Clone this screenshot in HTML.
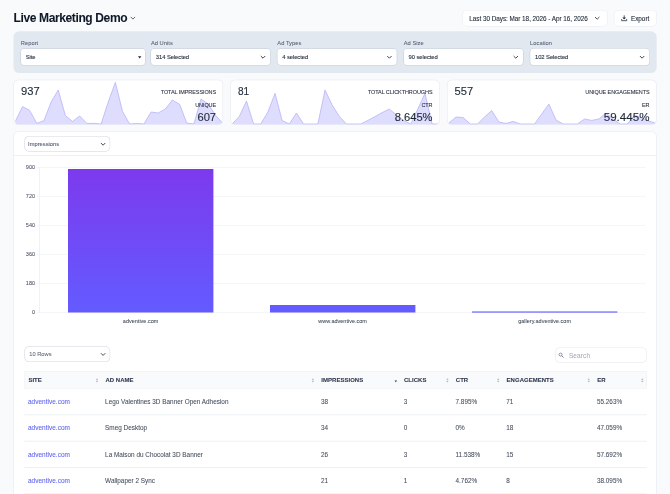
<!DOCTYPE html>
<html><head><meta charset="utf-8"><title>Live Marketing Demo</title>
<style>
*{box-sizing:border-box;margin:0;padding:0}
html,body{width:670px;height:494px;overflow:hidden;background:#f8fafc}
body{font-family:"Liberation Sans",sans-serif;position:relative;color:#1f2937}
#root{-webkit-text-stroke:0.6px;left:0;top:0;width:6700px;height:4940px;transform:scale(0.1);transform-origin:0 0;will-change:transform}
.abs,.si{position:absolute;display:block;overflow:visible}
.si{top:3780px}
div{position:absolute;white-space:nowrap}
.title{left:135px;top:109px;font-size:121px;font-weight:bold;letter-spacing:-4.2px;color:#111827;line-height:140px}
.btn{top:100px;height:164px;font-size:64px;line-height:171px;color:#1f2937;-webkit-text-stroke:1px #1f2937}
.panel{left:135px;top:312px;width:6432px;height:419px;background:#e2e8f0;border-radius:58px}
.flab{top:394px;font-size:57.5px;line-height:70px;color:#566275;letter-spacing:0.2px}
.fsel{top:484px;height:172px;font-size:59px;letter-spacing:-1px;-webkit-text-stroke:1px #1f2937;line-height:160px;color:#1f2937}
.fsel span{position:absolute;left:53px;top:6px}
.card{background:#fff;border:5px solid #e3e7ed;border-radius:40px}
.big{font-size:104px;line-height:120px;letter-spacing:0;color:#1f2937;-webkit-text-stroke:1.2px #1f2937}
.slab{font-size:55px;line-height:70px;color:#1f2937;letter-spacing:-0.8px;-webkit-text-stroke:0.8px #1f2937}
.sel2{left:244px;width:857px;height:156px;font-size:57.5px;line-height:166px;color:#525d70;padding-left:37px;-webkit-text-stroke:0.8px #525d70}
.yl{left:150px;width:200px;text-align:right;font-size:55px;line-height:70px;color:#464f5d;-webkit-text-stroke:0.6px #464f5d}
.gl{left:366px;width:6089px;height:7px;background:#f0f2f5}
.xl{width:1000px;text-align:center;top:3171px;font-size:55px;line-height:70px;color:#3f4856;-webkit-text-stroke:0.5px #3f4856}
.th{top:3762px;font-size:60px;font-weight:bold;letter-spacing:0.2px;line-height:70px;color:#2e3850;-webkit-text-stroke:0.8px #2e3850}
.td{font-size:64px;line-height:80px;color:#444d5b}
.lk{color:#5b5fef;font-size:65px}
.rl{left:244px;width:6223px;height:7px;background:#e6ebf1}
</style></head><body><div id="root">
<div class="title">Live Marketing Demo</div>
<svg class="abs" style="left:1304px;top:167px;width:50px;height:30px" viewBox="0 0 5 3"><path d="M0.6 0.5 L2.5 2.4 L4.4 0.5" fill="none" stroke="#4b5563" stroke-width="0.9" stroke-linecap="round" stroke-linejoin="round"/></svg>
<div style="left:4624px;top:99px;width:1453px;height:165px;border-radius:46px;background:#e8ecf1"><div style="left:5px;top:5px;width:1443px;height:155px;border-radius:41px;background:#fff"></div></div><div class="btn" style="left:4624px;width:1453px"><span style="position:absolute;left:69px;letter-spacing:-0.5px">Last 30 Days: Mar 18, 2026 - Apr 16, 2026</span></div>
<svg class="abs" style="left:5947px;top:168px;width:50px;height:30px" viewBox="0 0 5 3"><path d="M0.6 0.5 L2.5 2.4 L4.4 0.5" fill="none" stroke="#374151" stroke-width="0.9" stroke-linecap="round" stroke-linejoin="round"/></svg>
<div style="left:6139px;top:99px;width:428px;height:165px;border-radius:46px;background:#e8ecf1"><div style="left:5px;top:5px;width:418px;height:155px;border-radius:41px;background:#fff"></div></div><div class="btn" style="left:6138px;width:429px"><span style="position:absolute;left:171px;letter-spacing:-0.2px">Export</span></div>
<svg class="abs" style="left:6212px;top:153px;width:60px;height:60px" viewBox="0 0 6 6"><path d="M3 0.4 V3.3" fill="none" stroke="#2b3443" stroke-width="0.8" stroke-linecap="round"/><path d="M1.6 2.4 L3 3.9 L4.4 2.4 Z" fill="#2b3443" stroke="#2b3443" stroke-width="0.4" stroke-linejoin="round"/><path d="M0.5 4.1 V5.4 H5.5 V4.1" fill="none" stroke="#2b3443" stroke-width="0.8" stroke-linecap="round" stroke-linejoin="round"/></svg>
<div class="panel"></div>
<div class="flab" style="left:208px">Report</div><div style="left:204px;top:481px;width:1253px;height:177px;border-radius:46px;background:#bfc9d8"><div style="left:5px;top:5px;width:1243px;height:167px;border-radius:41px;background:#fff"></div></div><div class="fsel" style="left:204px;width:1253px"><span>Site</span></div><svg class="abs" style="left:1380px;top:563px;width:34px;height:22px" viewBox="0 0 3.4 2.2"><path d="M0 0 L3.4 0 L1.7 2.2 Z" fill="#1f2937"/></svg><div class="flab" style="left:1509px">Ad Units</div><div style="left:1505px;top:481px;width:1203px;height:177px;border-radius:46px;background:#bfc9d8"><div style="left:5px;top:5px;width:1193px;height:167px;border-radius:41px;background:#fff"></div></div><div class="fsel" style="left:1505px;width:1203px"><span>314 Selected</span></div><svg class="abs" style="left:2605px;top:558px;width:50px;height:30px" viewBox="0 0 5 3"><path d="M0.6 0.5 L2.5 2.4 L4.4 0.5" fill="none" stroke="#2b3443" stroke-width="0.9" stroke-linecap="round" stroke-linejoin="round"/></svg><div class="flab" style="left:2773px">Ad Types</div><div style="left:2769px;top:481px;width:1203px;height:177px;border-radius:46px;background:#bfc9d8"><div style="left:5px;top:5px;width:1193px;height:167px;border-radius:41px;background:#fff"></div></div><div class="fsel" style="left:2769px;width:1203px"><span>4 selected</span></div><svg class="abs" style="left:3869px;top:558px;width:50px;height:30px" viewBox="0 0 5 3"><path d="M0.6 0.5 L2.5 2.4 L4.4 0.5" fill="none" stroke="#2b3443" stroke-width="0.9" stroke-linecap="round" stroke-linejoin="round"/></svg><div class="flab" style="left:4037px">Ad Size</div><div style="left:4033px;top:481px;width:1203px;height:177px;border-radius:46px;background:#bfc9d8"><div style="left:5px;top:5px;width:1193px;height:167px;border-radius:41px;background:#fff"></div></div><div class="fsel" style="left:4033px;width:1203px"><span>90 selected</span></div><svg class="abs" style="left:5133px;top:558px;width:50px;height:30px" viewBox="0 0 5 3"><path d="M0.6 0.5 L2.5 2.4 L4.4 0.5" fill="none" stroke="#2b3443" stroke-width="0.9" stroke-linecap="round" stroke-linejoin="round"/></svg><div class="flab" style="left:5301px">Location</div><div style="left:5297px;top:481px;width:1202px;height:177px;border-radius:46px;background:#bfc9d8"><div style="left:5px;top:5px;width:1192px;height:167px;border-radius:41px;background:#fff"></div></div><div class="fsel" style="left:5297px;width:1202px"><span>102 Selected</span></div><svg class="abs" style="left:6396px;top:558px;width:50px;height:30px" viewBox="0 0 5 3"><path d="M0.6 0.5 L2.5 2.4 L4.4 0.5" fill="none" stroke="#2b3443" stroke-width="0.9" stroke-linecap="round" stroke-linejoin="round"/></svg>
<div style="left:135px;top:798px;width:2096px;height:452px;border-radius:50px;background:#e3e7ed"><div style="left:5px;top:5px;width:2086px;height:442px;border-radius:45px;background:#fff"></div></div><div style="left:2303px;top:798px;width:2096px;height:452px;border-radius:50px;background:#e3e7ed"><div style="left:5px;top:5px;width:2086px;height:442px;border-radius:45px;background:#fff"></div></div><div style="left:4470px;top:798px;width:2096px;height:452px;border-radius:50px;background:#e3e7ed"><div style="left:5px;top:5px;width:2086px;height:442px;border-radius:45px;background:#fff"></div></div>
<svg class="abs" style="left:0px;top:0px;width:6700px;height:4940px" viewBox="0 0 670 494"><defs><clipPath id="c13"><rect x="13.9" y="80.2" width="208.8" height="44.4" rx="4.6"/></clipPath><clipPath id="c230"><rect x="230.70000000000002" y="80.2" width="208.8" height="44.4" rx="4.6"/></clipPath><clipPath id="c447"><rect x="447.4" y="80.2" width="208.8" height="44.4" rx="4.6"/></clipPath></defs><g clip-path="url(#c13)"><path d="M15.40 121.20 L22.54 106.60 L29.68 110.40 L36.82 123.40 L43.96 120.60 L51.10 102.00 L58.24 90.00 L65.38 115.60 L72.52 121.40 L79.66 116.00 L86.80 123.40 L93.94 123.40 L101.08 124.00 L108.22 102.00 L115.36 82.40 L122.50 111.40 L129.64 124.00 L136.78 123.40 L143.92 124.00 L151.06 112.00 L158.20 113.00 L165.34 109.00 L172.48 100.00 L179.62 104.40 L186.76 123.00 L193.90 124.00 L201.04 99.00 L208.18 104.00 L215.32 115.00 L222.46 123.00 L222.46 125.4 L15.40 125.4 Z" fill="#dfddfe"/><path d="M15.40 121.20 L22.54 106.60 L29.68 110.40 L36.82 123.40 L43.96 120.60 L51.10 102.00 L58.24 90.00 L65.38 115.60 L72.52 121.40 L79.66 116.00 L86.80 123.40 L93.94 123.40 L101.08 124.00 L108.22 102.00 L115.36 82.40 L122.50 111.40 L129.64 124.00 L136.78 123.40 L143.92 124.00 L151.06 112.00 L158.20 113.00 L165.34 109.00 L172.48 100.00 L179.62 104.40 L186.76 123.00 L193.90 124.00 L201.04 99.00 L208.18 104.00 L215.32 115.00 L222.46 123.00" fill="none" stroke="#b3b0f9" stroke-width="0.75" stroke-linejoin="round"/></g><g clip-path="url(#c230)"><path d="M232.20 124.00 L239.34 116.40 L246.48 101.00 L253.62 124.00 L260.76 124.00 L267.90 112.00 L275.04 93.40 L282.18 120.60 L289.32 124.00 L296.46 113.00 L303.60 124.00 L310.74 124.00 L317.88 124.00 L325.02 90.00 L332.16 105.00 L339.30 116.40 L346.44 124.00 L353.58 124.00 L360.72 124.00 L367.86 120.40 L375.00 116.60 L382.14 112.60 L389.28 109.00 L396.42 115.00 L403.56 120.40 L410.70 124.00 L417.84 109.00 L424.98 93.40 L432.12 124.00 L439.26 124.00 L439.26 125.4 L232.20 125.4 Z" fill="#dfddfe"/><path d="M232.20 124.00 L239.34 116.40 L246.48 101.00 L253.62 124.00 L260.76 124.00 L267.90 112.00 L275.04 93.40 L282.18 120.60 L289.32 124.00 L296.46 113.00 L303.60 124.00 L310.74 124.00 L317.88 124.00 L325.02 90.00 L332.16 105.00 L339.30 116.40 L346.44 124.00 L353.58 124.00 L360.72 124.00 L367.86 120.40 L375.00 116.60 L382.14 112.60 L389.28 109.00 L396.42 115.00 L403.56 120.40 L410.70 124.00 L417.84 109.00 L424.98 93.40 L432.12 124.00 L439.26 124.00" fill="none" stroke="#b3b0f9" stroke-width="0.75" stroke-linejoin="round"/></g><g clip-path="url(#c447)"><path d="M448.90 123.00 L456.04 117.00 L463.18 117.60 L470.32 124.00 L477.46 124.00 L484.60 117.00 L491.74 110.60 L498.88 122.00 L506.02 123.40 L513.16 121.40 L520.30 124.00 L527.44 124.00 L534.58 124.00 L541.72 114.00 L548.86 104.00 L556.00 120.00 L563.14 124.00 L570.28 124.00 L577.42 124.00 L584.56 119.00 L591.70 120.40 L598.84 119.00 L605.98 113.00 L613.12 119.00 L620.26 124.00 L627.40 124.00 L634.54 115.00 L641.68 118.00 L648.82 121.00 L655.96 123.40 L655.96 125.4 L448.90 125.4 Z" fill="#dfddfe"/><path d="M448.90 123.00 L456.04 117.00 L463.18 117.60 L470.32 124.00 L477.46 124.00 L484.60 117.00 L491.74 110.60 L498.88 122.00 L506.02 123.40 L513.16 121.40 L520.30 124.00 L527.44 124.00 L534.58 124.00 L541.72 114.00 L548.86 104.00 L556.00 120.00 L563.14 124.00 L570.28 124.00 L577.42 124.00 L584.56 119.00 L591.70 120.40 L598.84 119.00 L605.98 113.00 L613.12 119.00 L620.26 124.00 L627.40 124.00 L634.54 115.00 L641.68 118.00 L648.82 121.00 L655.96 123.40" fill="none" stroke="#b3b0f9" stroke-width="0.75" stroke-linejoin="round"/></g></svg>
<div class="big" style="left:211px;top:853px;transform:scaleX(1.075);transform-origin:0 0">937</div><div class="slab" style="right:4539px;top:882px">TOTAL IMPRESSIONS</div><div class="slab" style="right:4539px;top:1020px">UNIQUE</div><div class="big" style="right:4539px;top:1115px;transform:scaleX(1.07);transform-origin:100% 0">607</div><div class="big" style="left:2379px;top:853px;transform:scaleX(0.97);transform-origin:0 0">81</div><div class="slab" style="right:2375px;top:882px">TOTAL CLICKTHROUGHS</div><div class="slab" style="right:2375px;top:1020px">CTR</div><div class="big" style="right:2375px;top:1115px;transform:scaleX(1.07);transform-origin:100% 0">8.645%</div><div class="big" style="left:4546px;top:853px;transform:scaleX(1.075);transform-origin:0 0">557</div><div class="slab" style="right:205px;top:882px">UNIQUE ENGAGEMENTS</div><div class="slab" style="right:205px;top:1020px">ER</div><div class="big" style="right:205px;top:1115px;transform:scaleX(1.115);transform-origin:100% 0">59.445%</div>
<div style="left:135px;top:1315px;width:6431px;height:3800px;border-radius:50px;background:#e3e7ed"><div style="left:5px;top:5px;width:6421px;height:3790px;border-radius:45px;background:#fff"></div></div>
<div style="left:244px;top:1359px;width:858px;height:158px;border-radius:50px;background:#d1d6de"><div style="left:5px;top:5px;width:848px;height:148px;border-radius:45px;background:#fff"></div></div><div class="sel2" style="top:1360px">Impressions</div>
<svg class="abs" style="left:1006px;top:1428px;width:50px;height:30px" viewBox="0 0 5 3"><path d="M0.6 0.5 L2.5 2.4 L4.4 0.5" fill="none" stroke="#2f3745" stroke-width="0.9" stroke-linecap="round" stroke-linejoin="round"/></svg>
<div style="left:140px;top:1550px;width:6422px;height:8px;background:#e9eef4"></div>
<div class="gl" style="top:1670px"></div><div class="gl" style="top:1960px"></div><div class="gl" style="top:2250px"></div><div class="gl" style="top:2540px"></div><div class="gl" style="top:2830px"></div><div class="gl" style="top:3120px"></div>
<div style="left:391px;top:1670px;width:8px;height:1460px;background:#edf0f4"></div>
<div class="yl" style="top:1636px">900</div><div class="yl" style="top:1926px">720</div><div class="yl" style="top:2216px">540</div><div class="yl" style="top:2506px">360</div><div class="yl" style="top:2796px">180</div><div class="yl" style="top:3086px">0</div>
<div style="left:680px;top:1690px;width:1454px;height:1435px;background:linear-gradient(#7c3aed,#635bff)"></div>
<div style="left:2700px;top:3050px;width:1454px;height:75px;background:linear-gradient(#645aff,#635bff)"></div>
<div style="left:4720px;top:3113px;width:1454px;height:15px;background:#8480ff"></div>
<div class="xl" style="left:906px">adventive.com</div><div class="xl" style="left:2926px">www.adventive.com</div><div class="xl" style="left:4946px">gallery.adventive.com</div>
<div style="left:244px;top:3463px;width:858px;height:158px;border-radius:50px;background:#d1d6de"><div style="left:5px;top:5px;width:848px;height:148px;border-radius:45px;background:#fff"></div></div><div class="sel2" style="top:3464px;padding-left:48px;line-height:149px;color:#5d6471;-webkit-text-stroke:0.5px #5d6471">10 Rows</div>
<svg class="abs" style="left:1006px;top:3530px;width:50px;height:30px" viewBox="0 0 5 3"><path d="M0.6 0.5 L2.5 2.4 L4.4 0.5" fill="none" stroke="#2f3745" stroke-width="0.9" stroke-linecap="round" stroke-linejoin="round"/></svg>
<div style="left:5552px;top:3474px;width:916px;height:154px;border-radius:48px;background:#e4e8ee"><div style="left:5px;top:5px;width:906px;height:144px;border-radius:43px;background:#fff"></div></div>
<svg class="abs" style="left:5585px;top:3525px;width:54px;height:54px" viewBox="0 0 5.4 5.4"><circle cx="2.1" cy="2.1" r="1.5" fill="none" stroke="#808a99" stroke-width="0.9"/><path d="M3.3 3.3 L4.8 4.8" stroke="#808a99" stroke-width="1" stroke-linecap="round"/></svg>
<div style="left:5689px;top:3517px;font-size:65px;line-height:80px;color:#a3abb7;letter-spacing:1px">Search</div>
<div style="left:244px;top:3712px;width:6223px;height:173px;border-radius:0px;background:#ebeef3"><div style="left:5px;top:5px;width:6213px;height:163px;border-radius:0px;background:#f9fafb"></div></div>
<div class="th" style="left:284px">SITE</div><svg class="si" style="left:958px;width:24px;height:46px" viewBox="0 0 2.4 4.6"><path d="M0 1.8 L1.2 0.2 L2.4 1.8 Z M0 2.8 L1.2 4.4 L2.4 2.8 Z" fill="#aab4c4"/></svg><div class="th" style="left:1054px">AD NAME</div><svg class="si" style="left:3117px;width:24px;height:46px" viewBox="0 0 2.4 4.6"><path d="M0 1.8 L1.2 0.2 L2.4 1.8 Z M0 2.8 L1.2 4.4 L2.4 2.8 Z" fill="#aab4c4"/></svg><div class="th" style="left:3213px">IMPRESSIONS</div><svg class="si" style="left:3945px;top:3805px;width:26px;height:18px" viewBox="0 0 2.6 1.8"><path d="M0 0 L2.6 0 L1.3 1.8 Z" fill="#2f3a50"/></svg><div class="th" style="left:4040px">CLICKS</div><svg class="si" style="left:4462px;width:24px;height:46px" viewBox="0 0 2.4 4.6"><path d="M0 1.8 L1.2 0.2 L2.4 1.8 Z M0 2.8 L1.2 4.4 L2.4 2.8 Z" fill="#aab4c4"/></svg><div class="th" style="left:4558px">CTR</div><svg class="si" style="left:4970px;width:24px;height:46px" viewBox="0 0 2.4 4.6"><path d="M0 1.8 L1.2 0.2 L2.4 1.8 Z M0 2.8 L1.2 4.4 L2.4 2.8 Z" fill="#aab4c4"/></svg><div class="th" style="left:5066px">ENGAGEMENTS</div><svg class="si" style="left:5876px;width:24px;height:46px" viewBox="0 0 2.4 4.6"><path d="M0 1.8 L1.2 0.2 L2.4 1.8 Z M0 2.8 L1.2 4.4 L2.4 2.8 Z" fill="#aab4c4"/></svg><div class="th" style="left:5972px">ER</div><svg class="si" style="left:6411px;width:24px;height:46px" viewBox="0 0 2.4 4.6"><path d="M0 1.8 L1.2 0.2 L2.4 1.8 Z M0 2.8 L1.2 4.4 L2.4 2.8 Z" fill="#aab4c4"/></svg>
<div class="td lk" style="left:280px;top:3976px">adventive.com</div><div class="td" style="left:1051px;top:3976px">Lego Valentines 3D Banner Open Adhesion</div><div class="td" style="left:3210px;top:3976px">38</div><div class="td" style="left:4037px;top:3976px">3</div><div class="td" style="left:4555px;top:3976px">7.895%</div><div class="td" style="left:5063px;top:3976px">71</div><div class="td" style="left:5969px;top:3976px">55.263%</div><div class="rl" style="top:4144.5px"></div><div class="td lk" style="left:280px;top:4239.5px">adventive.com</div><div class="td" style="left:1051px;top:4239.5px">Smeg Desktop</div><div class="td" style="left:3210px;top:4239.5px">34</div><div class="td" style="left:4037px;top:4239.5px">0</div><div class="td" style="left:4555px;top:4239.5px">0%</div><div class="td" style="left:5063px;top:4239.5px">18</div><div class="td" style="left:5969px;top:4239.5px">47.059%</div><div class="rl" style="top:4408px"></div><div class="td lk" style="left:280px;top:4503px">adventive.com</div><div class="td" style="left:1051px;top:4503px">La Maison du Chocolat 3D Banner</div><div class="td" style="left:3210px;top:4503px">26</div><div class="td" style="left:4037px;top:4503px">3</div><div class="td" style="left:4555px;top:4503px">11.538%</div><div class="td" style="left:5063px;top:4503px">15</div><div class="td" style="left:5969px;top:4503px">57.692%</div><div class="rl" style="top:4671.5px"></div><div class="td lk" style="left:280px;top:4766.5px">adventive.com</div><div class="td" style="left:1051px;top:4766.5px">Wallpaper 2 Sync</div><div class="td" style="left:3210px;top:4766.5px">21</div><div class="td" style="left:4037px;top:4766.5px">1</div><div class="td" style="left:4555px;top:4766.5px">4.762%</div><div class="td" style="left:5063px;top:4766.5px">8</div><div class="td" style="left:5969px;top:4766.5px">38.095%</div><div class="rl" style="top:4935px"></div>
</div></body></html>
